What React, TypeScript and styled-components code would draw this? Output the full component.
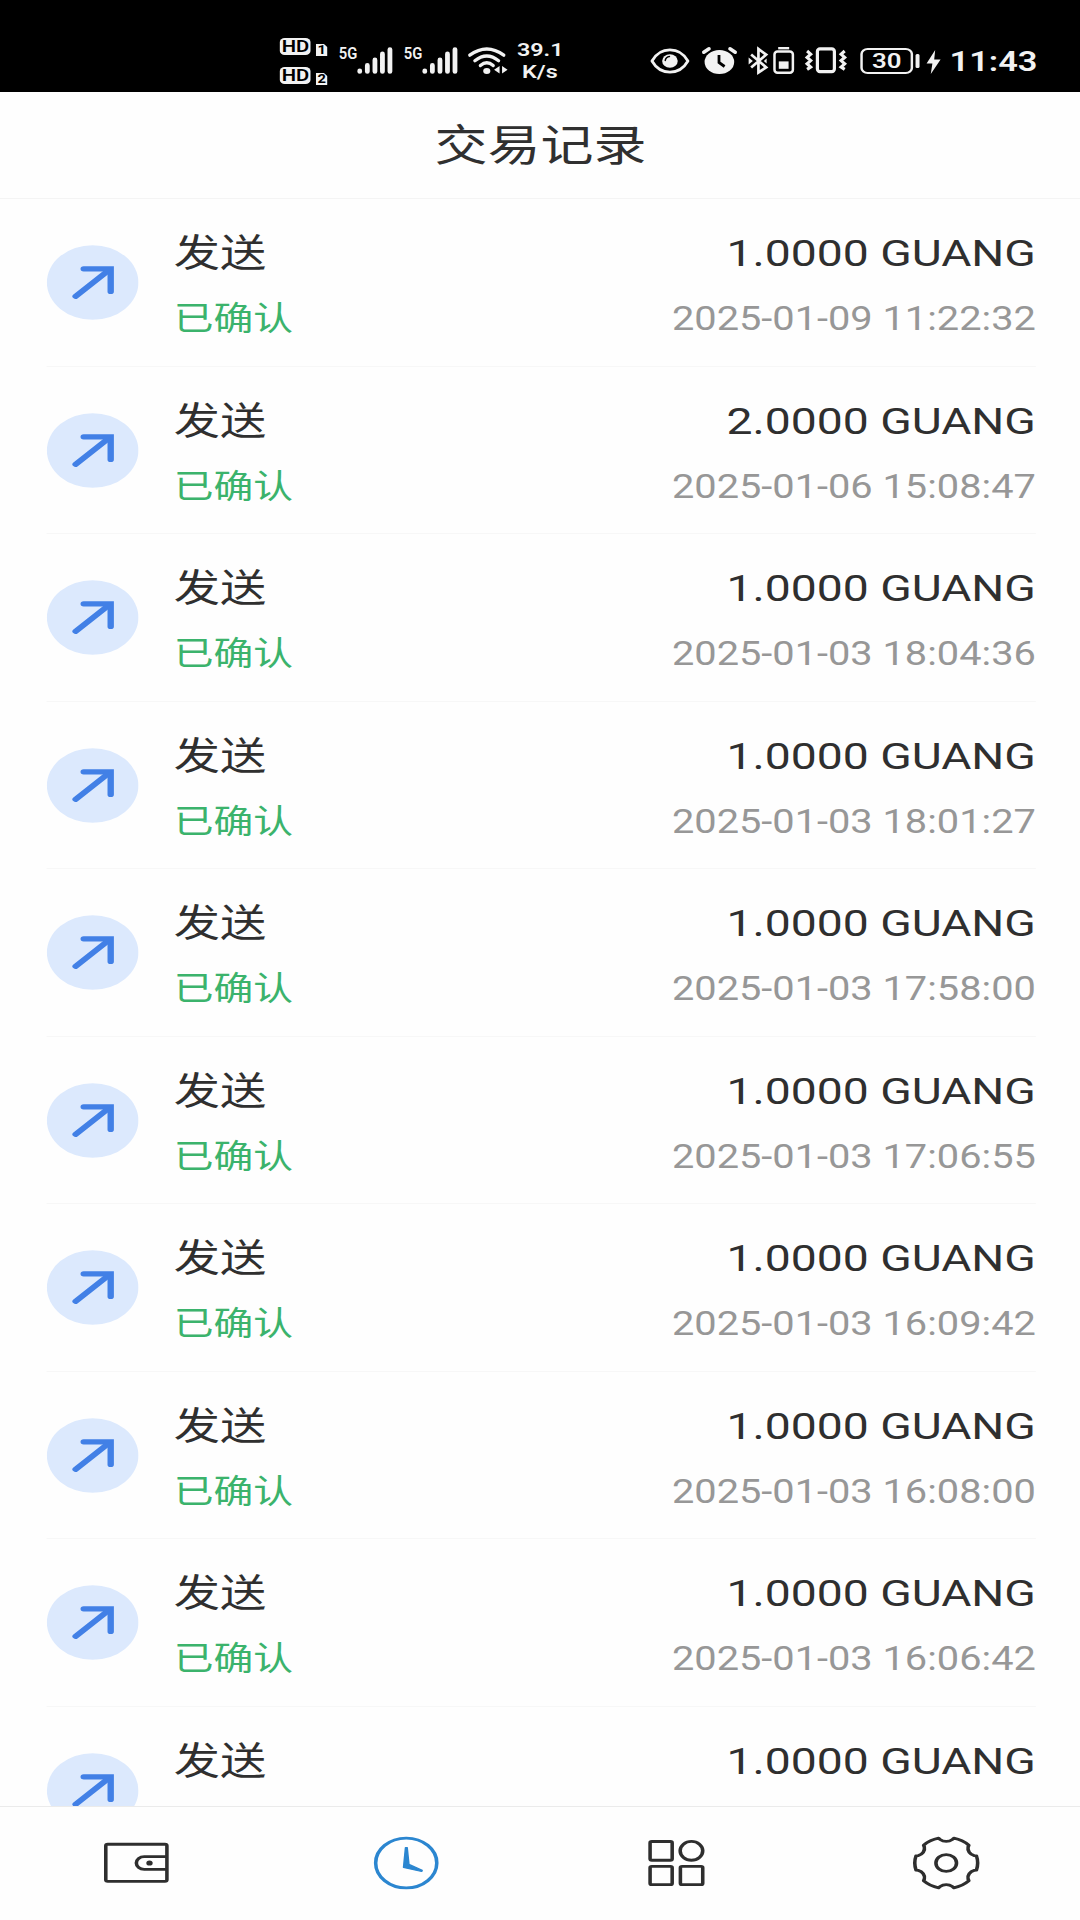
import React from "react";
import styled, { createGlobalStyle } from "styled-components";

// The phone screen is laid out 880 units wide and stretched to the window.
const STRETCH = 1080 / 880;
const u = (n: number) => `${(n / STRETCH).toFixed(2)}px`;

const Global = createGlobalStyle`
  body { margin: 0; background: #fff; overflow: hidden; }
  * { box-sizing: border-box; }
`;

const Viewport = styled.div`
  width: 1080px;
  height: 1920px;
  overflow: hidden;
`;

const Screen = styled.div`
  width: 880px;
  height: 1920px;
  display: flex;
  flex-direction: column;
  transform: scaleX(${STRETCH});
  transform-origin: 0 0;
  background: #fefefe;
  color: #2f2f2f;
  font-family: Roboto, "Noto Sans CJK SC", sans-serif;
`;

/* ---------- status bar ---------- */

const StatusBar = styled.header`
  height: 92px;
  flex: none;
  display: flex;
  align-items: flex-start;
  justify-content: space-between;
  padding: 38px ${u(42.5)} 0 ${u(280)};
  background: #000;
  color: #f2f2f2;
`;

const StatusGroup = styled.div`
  display: flex;
  align-items: flex-start;
  height: 48px;
`;

const HdStack = styled.div`
  display: flex;
  flex-direction: column;
  gap: 12px;
  width: ${u(48)};
`;

const HdLine = styled.div`
  display: flex;
  align-items: flex-end;
  gap: ${u(5)};
  height: 17px;
`;

const HdBadge = styled.span`
  width: ${u(31)};
  height: 17px;
  border-radius: 4px;
  background: #f2f2f2;
  color: #000;
  font-size: 16.5px;
  font-weight: 600;
  line-height: 17.5px;
  text-align: center;
`;

const SimBadge = styled.span`
  width: ${u(11.5)};
  height: 12.5px;
  margin-bottom: -1px;
  background: #f2f2f2;
  clip-path: polygon(0 0, 65% 0, 100% 30%, 100% 100%, 0 100%);
  color: #000;
  font-size: 12px;
  font-weight: 700;
  line-height: 13px;
  text-align: center;
`;

const Network = styled.div`
  display: flex;
  margin-left: ${u(11)};
  width: ${u(54)};
`;

const NetworkLabel = styled.span`
  width: ${u(18)};
  margin-top: 5px;
  font-size: 17px;
  font-weight: 600;
  line-height: 20px;
  transform: scaleX(0.71);
  transform-origin: 0 0;
`;

const Speed = styled.div`
  width: ${u(46)};
  margin-left: ${u(9)};
  font-size: 19px;
  font-weight: 600;
  line-height: 22px;
  padding-top: 1px;
  text-align: center;
`;

const Glyph = styled.svg<{ $w: number; $h: number; $left?: number; $top?: number }>`
  flex: none;
  display: block;
  width: ${(p) => u(p.$w)};
  height: ${(p) => p.$h}px;
  margin-left: ${(p) => u(p.$left ?? 0)};
  margin-top: ${(p) => p.$top ?? 0}px;
  overflow: visible;
`;

const BatteryShell = styled.div`
  width: ${u(53)};
  height: 26px;
  margin: 9.5px 0 0 ${u(12.5)};
  border: 2px solid #f2f2f2;
  border-radius: 6px;
  font-size: 21px;
  font-weight: 600;
  line-height: 22.5px;
  text-align: center;
`;

const Clock = styled.time`
  margin: 8px 0 0 ${u(9.5)};
  font-size: 28px;
  font-weight: 600;
  line-height: 32px;
  white-space: nowrap;
`;

/* ---------- title and list ---------- */

const TitleBar = styled.h1`
  flex: none;
  height: 107px;
  margin: 0;
  padding: 0 0 7px 1px;
  border-bottom: 1.5px solid #f4f4f4;
  display: flex;
  align-items: center;
  justify-content: center;
  font-size: 43.2px;
  font-weight: 400;
  color: #303030;
`;

const List = styled.main`
  flex: 1;
  min-height: 0;
  overflow: hidden;
  padding: 0 36px 0 37.7px;
`;

const Row = styled.article`
  height: 167.5px;
  display: flex;
  border-bottom: 1.5px solid #f7f7f7;
`;

const ArrowCircle = styled.svg`
  flex: none;
  width: 75px;
  height: 75px;
  margin-top: 46px;
`;

const Column = styled.div<{ $end?: boolean }>`
  display: flex;
  flex-direction: column;
  padding-top: 21px;
  margin-left: ${(p) => (p.$end ? "auto" : "28.8px")};
  text-align: ${(p) => (p.$end ? "right" : "left")};
`;

const Main = styled.span`
  font-size: 37.7px;
  line-height: 66px;
  height: 66px;
  white-space: nowrap;
`;

const Sub = styled.span<{ $color: string }>`
  font-size: 32.4px;
  line-height: 67px;
  height: 66px;
  white-space: nowrap;
  color: ${(p) => p.$color};
`;

/* ---------- tab bar ---------- */

const TabBar = styled.nav`
  flex: none;
  height: 114.5px;
  border-top: 1.5px solid #ebebeb;
  padding-left: 0.5px;
  display: grid;
  grid-template-columns: repeat(4, 220.1px);
  place-items: center;
`;

const TabIcon = styled.svg<{ $active?: boolean }>`
  width: 56px;
  height: 56px;
  overflow: visible;
  fill: none;
  stroke: ${(p) => (p.$active ? "#2b86d0" : "#2e2e2e")};
  stroke-width: 2.9;
  stroke-linejoin: round;
`;

const ClockHands = styled.path`
  fill: #2b86d0;
  stroke-width: 1.2;
`;

const records = [
  ["1.0000", "2025-01-09 11:22:32"],
  ["2.0000", "2025-01-06 15:08:47"],
  ["1.0000", "2025-01-03 18:04:36"],
  ["1.0000", "2025-01-03 18:01:27"],
  ["1.0000", "2025-01-03 17:58:00"],
  ["1.0000", "2025-01-03 17:06:55"],
  ["1.0000", "2025-01-03 16:09:42"],
  ["1.0000", "2025-01-03 16:08:00"],
  ["1.0000", "2025-01-03 16:06:42"],
  ["1.0000", ""],
];

const W = "#f2f2f2";

const Signal = () => (
  <Glyph $w={36} $h={28} $top={8.5} viewBox="0 0 36 28" preserveAspectRatio="none">
    <g stroke={W} strokeWidth="4.8" strokeLinecap="round">
      <path d="M2.6 24v.4M10.2 18.5v5.9M17.8 13v11.4M25.3 7v17.4M32.8 2.6v21.8" />
    </g>
  </Glyph>
);

const gearPath = () => {
  const at = (deg: number, r: number) => {
    const a = (deg * Math.PI) / 180;
    return `${(28 + r * Math.cos(a)).toFixed(2)} ${(28 + r * Math.sin(a)).toFixed(2)}`;
  };
  let d = `M${at(-16, 25.6)}`;
  for (let k = 0; k < 6; k++) {
    const mid = k * 60;
    d += `A25.6 25.6 0 0 1 ${at(mid + 16, 25.6)}L${at(mid + 18, 24)}A7.6 7.6 0 0 0 ${at(mid + 42, 24)}L${at(mid + 44, 25.6)}`;
  }
  return d + "Z";
};

const StatusArea = () => (
  <StatusBar>
    <StatusGroup>
      <HdStack>
        <HdLine><HdBadge>HD</HdBadge><SimBadge>1</SimBadge></HdLine>
        <HdLine><HdBadge>HD</HdBadge><SimBadge>2</SimBadge></HdLine>
      </HdStack>
      <Network><NetworkLabel>5G</NetworkLabel><Signal /></Network>
      <Network><NetworkLabel>5G</NetworkLabel><Signal /></Network>
      <Glyph $w={40} $h={28} $left={10} $top={8.5} viewBox="0 0 40 28" preserveAspectRatio="none">
        <g fill="none" stroke={W} strokeWidth="3.3" strokeLinecap="round">
          <path d="M2.2 8.2Q19.2-4.2 36.2 8.2" />
          <path d="M7.3 13.8Q19.2 4.2 31 13.8" />
          <path d="M12.8 18.6Q19.2 13 25.6 18.6" />
        </g>
        <ellipse cx="19.2" cy="24" rx="3.6" ry="3" fill={W} />
        <path d="M32 19v7.5l-5.5-3.7zM34.5 19v7.5l5.5-3.7z" fill={W} />
      </Glyph>
      <Speed>39.1<br />K/s</Speed>
    </StatusGroup>
    <StatusGroup>
      <Glyph $w={39} $h={26} $top={10} viewBox="0 0 39 26" preserveAspectRatio="none">
        <path d="M1.5 13C10-1.8 29-1.8 37.5 13C29 27.8 10 27.8 1.5 13Z" fill="none" stroke={W} strokeWidth="2.8" strokeLinejoin="round" />
        <ellipse cx="19.5" cy="13" rx="7.8" ry="6.8" fill={W} />
        <path d="M14.8 12.4q.6-3.4 4.2-3.9" fill="none" stroke="#000" strokeWidth="1.5" strokeLinecap="round" />
      </Glyph>
      <Glyph $w={35} $h={28} $left={12.5} $top={9} viewBox="0 0 35 28" preserveAspectRatio="none">
        <ellipse cx="17.4" cy="14.9" rx="14.8" ry="12" fill={W} />
        <path d="M1.8 5.2L7 1.8M33.2 5.2L28 1.8" stroke={W} strokeWidth="3.6" strokeLinecap="round" />
        <path d="M17 7.9v7.6l5.6 4" fill="none" stroke="#000" strokeWidth="2.8" />
      </Glyph>
      <Glyph $w={20} $h={28} $left={12} $top={9} viewBox="0 0 20 28" preserveAspectRatio="none">
        <path d="M2.5 7.5L17.5 20.4L9.8 25.4V2l7.7 5.6L2.5 20.5" fill="none" stroke={W} strokeWidth="2.7" />
        <path d="M0 10.5l4.2 3.5l-4.2 3.5zM18 11.5l-2.8 2.5l2.8 2.5z" fill={W} />
      </Glyph>
      <Glyph $w={21} $h={28} $left={4} $top={9} viewBox="0 0 21 28" preserveAspectRatio="none">
        <path d="M5 1.2h11" stroke={W} strokeWidth="2.4" />
        <rect x="1.3" y="4.6" width="18.4" height="21.2" rx="3" fill="none" stroke={W} strokeWidth="2.5" />
        <rect x="5.6" y="14.4" width="9.8" height="7.4" fill={W} />
      </Glyph>
      <Glyph $w={42} $h={27} $left={12} $top={9} viewBox="0 0 42 27" preserveAspectRatio="none">
        <rect x="12.3" y="1.8" width="17" height="22.8" rx="2.6" fill="none" stroke={W} strokeWidth="3.2" />
        <path d="M2 4l3.6 3.2l-3.6 3.2l3.6 3.2l-3.6 3.2l3.6 3.2l-3.6 2.4M39.6 4l-3.6 3.2l3.6 3.2l-3.6 3.2l3.6 3.2l-3.6 3.2l3.6 2.4" fill="none" stroke={W} strokeWidth="3.1" />
      </Glyph>
      <BatteryShell>30</BatteryShell>
      <Glyph $w={4} $h={14} $left={2} $top={15.5} viewBox="0 0 4 14" preserveAspectRatio="none">
        <rect width="4" height="14" rx="1.5" fill={W} />
      </Glyph>
      <Glyph $w={14} $h={24} $left={7} $top={11.5} viewBox="0 0 14 24" preserveAspectRatio="none">
        <path d="M8.6 0L0 13.4h5.8L4.2 24L14 9.4H7.6z" fill={W} />
      </Glyph>
      <Clock>11:43</Clock>
    </StatusGroup>
  </StatusBar>
);

export default function App() {
  return (
    <Viewport>
      <Global />
      <Screen>
        <StatusArea />
        <TitleBar>交易记录</TitleBar>
        <List>
          {records.map(([amount, time], i) => (
            <Row key={i}>
              <ArrowCircle viewBox="0 0 75 75">
                <circle cx="37.5" cy="37.5" r="37.3" fill="#dce9fd" />
                <path d="M23.6 51.3L51 24.8" fill="none" stroke="#4280e6" strokeWidth="5.2" strokeLinecap="round" />
                <path d="M30.2 23.8H52.2V46.4" fill="none" stroke="#4280e6" strokeWidth="5.2" strokeLinecap="round" strokeLinejoin="miter" />
              </ArrowCircle>
              <Column>
                <Main>发送</Main>
                {time && <Sub $color="#3bb36c">已确认</Sub>}
              </Column>
              <Column $end>
                <Main>{amount} GUANG</Main>
                {time && <Sub $color="#979797">{time}</Sub>}
              </Column>
            </Row>
          ))}
        </List>
        <TabBar>
          <TabIcon viewBox="0 0 56 56">
            <rect x="3.2" y="9.2" width="49.8" height="37.2" rx="1.6" />
            <path d="M52.5 21.6H34.5a6.4 6.4 0 0 0 0 12.8H52.5" />
            <circle cx="38.8" cy="28" r="2.6" fill="#2e2e2e" stroke="none" />
          </TabIcon>
          <TabIcon $active viewBox="0 0 56 56">
            <circle cx="28" cy="28" r="24.9" />
            <ClockHands d="M27.4 12.5h1.4L30.2 29.4L41 35.3l-.4 1.2L25.8 32.4Z" />
          </TabIcon>
          <TabIcon viewBox="0 0 56 56">
            <rect x="6.7" y="6.5" width="18" height="18.7" rx="1.4" />
            <ellipse cx="40.4" cy="15.8" rx="9.2" ry="9.4" />
            <rect x="6.7" y="31.4" width="18" height="18.2" rx="1.4" />
            <rect x="31.4" y="31.4" width="18.2" height="18.2" rx="1.4" />
          </TabIcon>
          <TabIcon viewBox="0 0 56 56">
            <path d={gearPath()} />
            <circle cx="28" cy="28" r="8.4" />
          </TabIcon>
        </TabBar>
      </Screen>
    </Viewport>
  );
}
